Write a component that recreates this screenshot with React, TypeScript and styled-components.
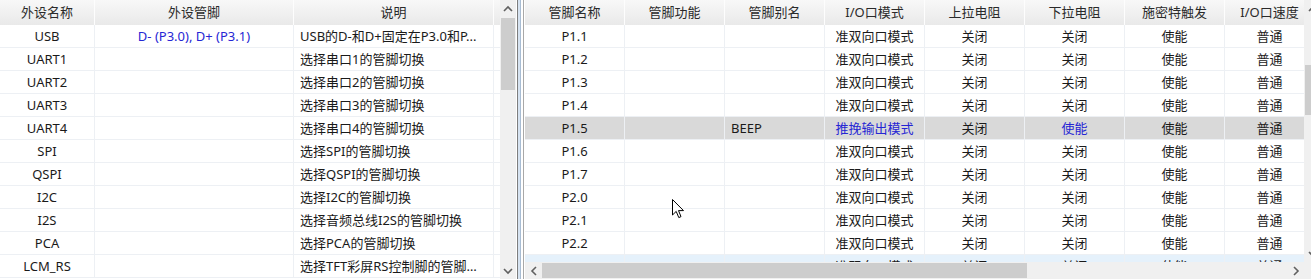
import React from 'react'
import styled, { createGlobalStyle } from 'styled-components'

const GlobalStyle = createGlobalStyle`
  html, body {
    margin: 0;
    padding: 0;
    background: #fff;
    overflow: hidden;
  }
  body {
    font-family: "Noto Sans", "Noto Sans CJK SC", sans-serif;
    font-size: 13px;
    color: #1a1a1a;
  }
`

const Window = styled.div`
  position: relative;
  display: flex;
  width: 1311px;
  height: 279px;
  overflow: hidden;
  background: #fff;
`

const Pane = styled.div<{ $view: number; $hscroll?: boolean }>`
  flex: 0 0 auto;
  display: grid;
  grid-template-columns: ${p => p.$view}px 17px;
  grid-template-rows: ${p => (p.$hscroll ? '1fr 17px' : '1fr')};
  height: 279px;
`

const LeftPane = styled(Pane)`
  grid-template-columns: ${p => p.$view}px 16px;
`

const Viewport = styled.div`
  overflow: hidden;
  background: #fff;
`

const Splitter = styled.div`
  flex: 0 0 9px;
  background: linear-gradient(
    to right,
    #fff 0 1px,
    #7d7d7d 1px 2px,
    #d6e3f1 2px 4px,
    #a9bdd3 4px 5px,
    #fff 5px 7px,
    #a8a8a8 7px 8px,
    #fff 8px 9px
  );
`

const HeaderRow = styled.div<{ $cols: string }>`
  display: grid;
  grid-template-columns: ${p => p.$cols};
  height: 25px;
  background: linear-gradient(to bottom, #f8f8f8, #e9e9e9);
`

const HeaderCell = styled.div`
  line-height: 25px;
  text-align: center;
  color: #2a2a2a;
  white-space: nowrap;
  overflow: hidden;
  border-right: 1px solid #fdfdfd;
`

const Row = styled.div<{ $cols: string; $state?: 'selected' | 'hover' }>`
  display: grid;
  grid-template-columns: ${p => p.$cols};
  height: 23px;
  box-sizing: border-box;
  border-bottom: 1px solid #edf0f4;
  background: ${p =>
    p.$state === 'selected' ? '#d9d9d9' : p.$state === 'hover' ? '#e5f1fb' : '#fff'};
`

const Cell = styled.div<{ $align?: 'left' | 'center'; $accent?: boolean }>`
  padding: 0 6px;
  line-height: 22px;
  text-align: ${p => p.$align ?? 'center'};
  color: ${p => (p.$accent ? '#2626d4' : '#1a1a1a')};
  white-space: nowrap;
  overflow: hidden;
  text-overflow: ellipsis;
  border-right: 1px solid #edf0f4;
`

const VScroll = styled.div`
  display: flex;
  flex-direction: column;
  background: #f0f0f0;
  height: 100%;
  overflow: hidden;
`

const HScroll = styled.div`
  display: flex;
  background: #f0f0f0;
`

const ArrowButton = styled.div`
  flex: 0 0 17px;
  width: 100%;
  height: 17px;
  display: flex;
  align-items: center;
  justify-content: center;
`

const HArrowButton = styled(ArrowButton)`
  width: 17px;
  height: 100%;
`

const VThumb = styled.div<{ $offset: number; $size: number }>`
  margin: ${p => p.$offset}px 1px 0;
  height: ${p => p.$size}px;
  background: #cdcdcd;
`

const HThumb = styled.div<{ $offset: number; $size: number }>`
  margin: 1px 0 1px ${p => p.$offset}px;
  width: ${p => p.$size}px;
  background: #cdcdcd;
`

const Filler = styled.div`
  flex: 1;
`

const Corner = styled.div`
  background: #f0f0f0;
`

const Pointer = styled.svg`
  position: absolute;
  left: 672px;
  top: 199px;
`

const Chevron = ({ dir }: { dir: 'up' | 'down' | 'left' | 'right' }) => {
  const pts = {
    up: '1,6 5,2 9,6',
    down: '1,2 5,6 9,2',
    left: '6,1 2,5 6,9',
    right: '2,1 6,5 2,9',
  }[dir]
  const vertical = dir === 'up' || dir === 'down'
  return (
    <svg width={vertical ? 10 : 8} height={vertical ? 8 : 10} viewBox={vertical ? '0 0 10 8' : '0 0 8 10'}>
      <polyline points={pts} fill="none" stroke="#606060" strokeWidth="1.6" />
    </svg>
  )
}

const VerticalBar = ({ top, size }: { top: number; size: number }) => (
  <VScroll>
    <ArrowButton>
      <Chevron dir="up" />
    </ArrowButton>
    <VThumb $offset={top} $size={size} />
    <Filler />
    <ArrowButton>
      <Chevron dir="down" />
    </ArrowButton>
  </VScroll>
)

const LEFT_COLS = '95px 199px 200px'
const RIGHT_COLS = '100px 100px 100px 100px 100px 100px 100px 90px'

const peripherals = [
  { name: 'USB', pins: 'D- (P3.0), D+ (P3.1)', note: 'USB的D-和D+固定在P3.0和P...' },
  { name: 'UART1', pins: '', note: '选择串口1的管脚切换' },
  { name: 'UART2', pins: '', note: '选择串口2的管脚切换' },
  { name: 'UART3', pins: '', note: '选择串口3的管脚切换' },
  { name: 'UART4', pins: '', note: '选择串口4的管脚切换' },
  { name: 'SPI', pins: '', note: '选择SPI的管脚切换' },
  { name: 'QSPI', pins: '', note: '选择QSPI的管脚切换' },
  { name: 'I2C', pins: '', note: '选择I2C的管脚切换' },
  { name: 'I2S', pins: '', note: '选择音频总线I2S的管脚切换' },
  { name: 'PCA', pins: '', note: '选择PCA的管脚切换' },
  { name: 'LCM_RS', pins: '', note: '选择TFT彩屏RS控制脚的管脚切换' },
]

type Pin = {
  name: string
  alias?: string
  mode?: string
  pullDown?: string
  state?: 'selected' | 'hover'
}

const pins: Pin[] = [
  { name: 'P1.1' },
  { name: 'P1.2' },
  { name: 'P1.3' },
  { name: 'P1.4' },
  { name: 'P1.5', alias: 'BEEP', mode: '推挽输出模式', pullDown: '使能', state: 'selected' },
  { name: 'P1.6' },
  { name: 'P1.7' },
  { name: 'P2.0' },
  { name: 'P2.1' },
  { name: 'P2.2' },
  { name: 'P2.3', state: 'hover' },
]

const pinHeaders = ['管脚名称', '管脚功能', '管脚别名', 'I/O口模式', '上拉电阻', '下拉电阻', '施密特触发', 'I/O口速度']

export default function App() {
  return (
    <>
      <GlobalStyle />
      <Window>
        <LeftPane $view={500}>
          <Viewport>
            <HeaderRow $cols={LEFT_COLS}>
              <HeaderCell>外设名称</HeaderCell>
              <HeaderCell>外设管脚</HeaderCell>
              <HeaderCell>说明</HeaderCell>
            </HeaderRow>
            {peripherals.map(p => (
              <Row key={p.name} $cols={LEFT_COLS}>
                <Cell>{p.name}</Cell>
                <Cell $accent>{p.pins}</Cell>
                <Cell $align="left">{p.note}</Cell>
              </Row>
            ))}
          </Viewport>
          <VerticalBar top={1} size={72} />
        </LeftPane>

        <Splitter />

        <Pane $view={779} $hscroll>
          <Viewport>
            <HeaderRow $cols={RIGHT_COLS}>
              {pinHeaders.map(h => (
                <HeaderCell key={h}>{h}</HeaderCell>
              ))}
            </HeaderRow>
            {pins.map(pin => (
              <Row key={pin.name} $cols={RIGHT_COLS} $state={pin.state}>
                <Cell>{pin.name}</Cell>
                <Cell />
                <Cell $align="left">{pin.alias}</Cell>
                <Cell $accent={!!pin.mode}>{pin.mode ?? '准双向口模式'}</Cell>
                <Cell>关闭</Cell>
                <Cell $accent={!!pin.pullDown}>{pin.pullDown ?? '关闭'}</Cell>
                <Cell>使能</Cell>
                <Cell>普通</Cell>
              </Row>
            ))}
          </Viewport>
          <VerticalBar top={48} size={50} />
          <HScroll>
            <HArrowButton>
              <Chevron dir="left" />
            </HArrowButton>
            <HThumb $offset={0} $size={485} />
            <Filler />
            <HArrowButton>
              <Chevron dir="right" />
            </HArrowButton>
          </HScroll>
          <Corner />
        </Pane>

        <Pointer width="13" height="20" viewBox="0 0 13 20">
          <path
            d="M0.5 0.5 L0.5 16 L4.2 12.4 L6.8 18.6 L9 17.6 L6.5 11.6 L11.5 11.6 Z"
            fill="#fff"
            stroke="#000"
            strokeWidth="1"
            strokeLinejoin="miter"
          />
        </Pointer>
      </Window>
    </>
  )
}
